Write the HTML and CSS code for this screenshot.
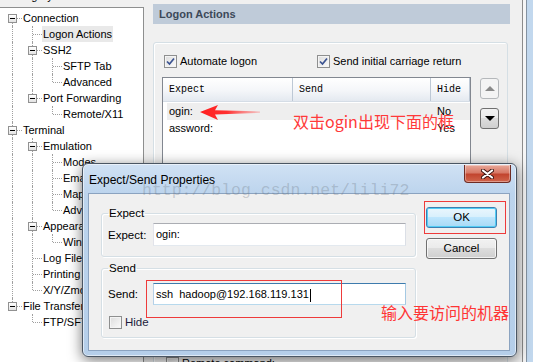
FILE: index.html
```html
<!DOCTYPE html>
<html lang="en">
<head>
  <meta charset="UTF-8">
  <title>Session Options - Logon Actions</title>
  <link rel="stylesheet" href="styles.css">
</head>
<body>
  <div class="tree-pane">
    <div class="category"><span>Category:</span></div>
    <div class="tree">
      <div class="node"><span class="cell tg dn"><i class="tog"></i></span><span class="label">Connection</span></div>
      <div class="node"><span class="cell v"></span><span class="cell t"></span><span class="label sel">Logon Actions</span></div>
      <div class="node"><span class="cell v"></span><span class="cell tg both"><i class="tog"></i></span><span class="label">SSH2</span></div>
      <div class="node"><span class="cell v"></span><span class="cell v"></span><span class="cell t"></span><span class="label">SFTP Tab</span></div>
      <div class="node"><span class="cell v"></span><span class="cell v"></span><span class="cell l"></span><span class="label">Advanced</span></div>
      <div class="node"><span class="cell v"></span><span class="cell tg up"><i class="tog"></i></span><span class="label">Port Forwarding</span></div>
      <div class="node"><span class="cell v"></span><span class="cell"></span><span class="cell l"></span><span class="label">Remote/X11</span></div>
      <div class="node"><span class="cell tg both"><i class="tog"></i></span><span class="label">Terminal</span></div>
      <div class="node"><span class="cell v"></span><span class="cell tg both"><i class="tog"></i></span><span class="label">Emulation</span></div>
      <div class="node"><span class="cell v"></span><span class="cell v"></span><span class="cell t"></span><span class="label">Modes</span></div>
      <div class="node"><span class="cell v"></span><span class="cell v"></span><span class="cell t"></span><span class="label">Emacs</span></div>
      <div class="node"><span class="cell v"></span><span class="cell v"></span><span class="cell t"></span><span class="label">Mapped Keys</span></div>
      <div class="node"><span class="cell v"></span><span class="cell v"></span><span class="cell l"></span><span class="label">Advanced</span></div>
      <div class="node"><span class="cell v"></span><span class="cell tg both"><i class="tog"></i></span><span class="label">Appearance</span></div>
      <div class="node"><span class="cell v"></span><span class="cell v"></span><span class="cell l"></span><span class="label">Window</span></div>
      <div class="node"><span class="cell v"></span><span class="cell t"></span><span class="label">Log File</span></div>
      <div class="node"><span class="cell v"></span><span class="cell t"></span><span class="label">Printing</span></div>
      <div class="node"><span class="cell v"></span><span class="cell l"></span><span class="label">X/Y/Zmodem</span></div>
      <div class="node"><span class="cell tg up"><i class="tog"></i></span><span class="label">File Transfer</span></div>
      <div class="node"><span class="cell"></span><span class="cell l"></span><span class="label">FTP/SFTP</span></div>
    </div>
  </div>

  <div class="main">
    <div class="page-title">Logon Actions</div>
    <div class="group">
      <div class="checks">
        <span class="check"><span class="cb"><svg width="11" height="11" viewBox="0 0 11 11"><path d="M2 5.5 L4.5 8 L9 2.5" fill="none" stroke="#3b5391" stroke-width="1.7"/></svg></span>Automate logon</span>
        <span class="check"><span class="cb"><svg width="11" height="11" viewBox="0 0 11 11"><path d="M2 5.5 L4.5 8 L9 2.5" fill="none" stroke="#3b5391" stroke-width="1.7"/></svg></span>Send initial carriage return</span>
      </div>
      <div class="list-row">
        <div class="list">
          <div class="list-head">
            <span class="col c1">Expect</span><span class="col c2">Send</span><span class="col c3">Hide</span>
          </div>
          <div class="list-body">
            <div class="item sel"><span class="col c1">ogin:</span><span class="col c2"></span><span class="col c3">No</span></div>
            <div class="item"><span class="col c1">assword:</span><span class="col c2"></span><span class="col c3">Yes</span></div>
          </div>
        </div>
        <div class="arrows">
          <span class="arrow off"><svg width="10" height="5" viewBox="0 0 10 5"><polygon points="0,5 5,0 10,5" fill="#8a8a8a"/></svg></span>
          <span class="arrow"><svg width="10" height="5" viewBox="0 0 10 5"><polygon points="0,0 10,0 5,5" fill="#000"/></svg></span>
        </div>
      </div>
      <span class="check remote"><span class="cb"></span>Remote command:</span>
    </div>
  </div>
  <div class="edge"></div>

  <svg class="pointer" width="64" height="19" viewBox="0 0 64 19">
    <defs>
      <linearGradient id="fade" x1="0" x2="1" y1="0" y2="0">
        <stop offset="0" stop-color="#ff1e1e"/>
        <stop offset="0.45" stop-color="#ff3030"/>
        <stop offset="1" stop-color="#ff6a6a" stop-opacity="0.35"/>
      </linearGradient>
    </defs>
    <polygon points="2,9 20,2 17,7.2 62,8.4 62,9.8 17,11.4 20,17" fill="url(#fade)"/>
  </svg>
  <div class="note note-list">双击ogin出现下面的框</div>

  <div class="dialog">
    <div class="titlebar">
      <span class="title">Expect/Send Properties</span>
      <span class="close"><svg width="13" height="10" viewBox="0 0 13 10"><path d="M2 1.5 L11 8.5 M11 1.5 L2 8.5" stroke="#3c1410" stroke-width="4" stroke-linecap="round"/><path d="M2 1.5 L11 8.5 M11 1.5 L2 8.5" stroke="#fff" stroke-width="2.2" stroke-linecap="round"/></svg></span>
    </div>
    <div class="client">
      <div class="fields">
        <fieldset class="fs fs-expect">
          <legend>Expect</legend>
          <div class="field"><span class="field-label">Expect:</span><div class="text">ogin:</div></div>
        </fieldset>
        <fieldset class="fs fs-send">
          <legend>Send</legend>
          <div class="field"><span class="field-label">Send:</span><div class="text focus">ssh  hadoop@192.168.119.131<span class="caret"></span></div></div>
          <span class="check hide"><span class="cb"></span>Hide</span>
        </fieldset>
      </div>
      <div class="buttons">
        <span class="btn default">OK</span>
        <span class="btn">Cancel</span>
      </div>
    </div>
    <div class="watermark">http://blog.csdn.net/lili72</div>
    <div class="mark mark-ok"></div>
    <div class="mark mark-send"></div>
    <div class="note note-send">输入要访问的机器</div>
  </div>
</body>
</html>
```

FILE: styles.css
```css
body {
  margin: 0;
  width: 533px;
  height: 362px;
  overflow: hidden;
  position: relative;
  display: flex;
  background-color: #f0f0f0;
  color: #000;
  font-family: "Liberation Sans", Arial, sans-serif;
  font-size: 11px;
}

/* left category tree */
.tree-pane {
  width: 144px;
  flex: none;
  display: flex;
  flex-direction: column;
}

.category {
  height: 7px;
  overflow: hidden;
  padding-left: 8px;
}

.category span {
  display: block;
  line-height: 14px;
  margin-top: -11px;
}

.tree {
  flex: 1;
  background-color: #fff;
  border-top: 1px solid #8e8f8f;
  border-right: 1px solid #8e8f8f;
  padding: 2px 0 0 2px;
}

.node {
  display: flex;
  height: 16px;
  white-space: nowrap;
}

.cell {
  position: relative;
  width: 20px;
  height: 16px;
  flex: none;
}

.cell.v::before,
.cell.t::before,
.cell.l::before,
.cell.tg::before {
  content: '';
  position: absolute;
  left: 10px;
  top: 0;
  bottom: 0;
  border-left: 1px dotted #a0a0a0;
}

.cell.l::before { bottom: 8px; }
.cell.tg.up::before { bottom: 12px; }
.cell.tg.dn::before { top: 12px; }

.cell.t::after,
.cell.l::after,
.cell.tg::after {
  content: '';
  position: absolute;
  left: 11px;
  right: 0;
  top: 8px;
  border-top: 1px dotted #a0a0a0;
}

.cell.tg::after { left: 15px; }

.tog {
  position: absolute;
  left: 6px;
  top: 4px;
  width: 9px;
  height: 9px;
  box-sizing: border-box;
  border: 1px solid #919191;
  background: linear-gradient(#fff, #e3e3e3);
  z-index: 1;
}

.tog::after {
  content: '';
  position: absolute;
  left: 1px;
  top: 3px;
  width: 5px;
  height: 1px;
  background-color: #000;
}

.label {
  padding: 0 1px;
  line-height: 16px;
}

.label.sel {
  background-color: #e9e9e9;
}

/* right page */
.main {
  flex: 1;
  padding: 4px 12px 0 9px;
}

.page-title {
  height: 20px;
  line-height: 20px;
  padding-left: 6px;
  background-color: #bfcbd9;
  color: #3c4858;
  font-weight: bold;
}

.group {
  margin: 18px 2px 0 0;
  height: 340px;
  border: 1px solid #d5dfe5;
  border-radius: 3px;
  box-shadow: inset 1px 1px 0 #fff;
  padding: 12px 8px 0;
}

.checks {
  display: flex;
  padding-left: 2px;
  height: 13px;
}

.checks .check:first-child {
  width: 153px;
}

.check {
  display: flex;
  align-items: center;
  gap: 3px;
  line-height: 13px;
  white-space: nowrap;
}

.cb {
  width: 13px;
  height: 13px;
  flex: none;
  box-sizing: border-box;
  border: 1px solid #8e8f8f;
  background: linear-gradient(135deg, #dcdcdc, #fbfbfb);
  box-shadow: inset 0 0 0 1px #f4f4f4;
  display: flex;
  align-items: center;
  justify-content: center;
}

.list-row {
  display: flex;
  gap: 9px;
  margin-top: 9px;
}

.list {
  width: 309px;
  height: 180px;
  box-sizing: border-box;
  border: 1px solid #828790;
  background-color: #fff;
}

.list-head {
  display: flex;
  height: 24px;
  box-sizing: border-box;
  background: linear-gradient(#fff, #f4f6f9 55%, #e4e9f0);
  border-bottom: 1px solid #d5dde6;
  font-family: "Liberation Mono", monospace;
  font-size: 10px;
  line-height: 23px;
}

.col {
  box-sizing: border-box;
  padding-left: 6px;
  flex: none;
}

.c1 { width: 130px; }
.c2 { width: 138px; }
.c3 { width: 39px; }

.list-head .col {
  border-right: 1px solid #bdc8d5;
}

.list-body {
  padding-top: 1px;
}

.item {
  display: flex;
  height: 17px;
  line-height: 17px;
}

.item.sel {
  background: linear-gradient(to right, transparent 4px, #eeeeee 4px);
}

.arrows {
  display: flex;
  flex-direction: column;
  gap: 9px;
  margin-top: 1px;
}

.arrow {
  width: 19px;
  height: 21px;
  box-sizing: border-box;
  border: 1px solid #707070;
  border-radius: 3px;
  background: linear-gradient(#f2f2f2, #ebebeb 50%, #dddddd 50%, #cfcfcf);
  display: flex;
  align-items: center;
  justify-content: center;
}

.arrow.off {
  border-color: #b5b8bb;
  background: #f4f4f4;
}

.remote {
  margin-top: 100px;
  padding-left: 4px;
}

.edge {
  width: 11px;
  flex: none;
  background: linear-gradient(to right, #8c8c8c 0 1px, #f6f6f6 1px 4px, #8593a2 4px 5px, #c2d8ee 5px);
}

/* annotations */
.pointer {
  position: absolute;
  left: 198px;
  top: 103px;
}

.note {
  position: absolute;
  font-family: "Noto Sans CJK SC", sans-serif;
  font-size: 16px;
  line-height: 20px;
  color: #ff3a3a;
  white-space: nowrap;
}

.note-list {
  left: 293px;
  top: 111px;
}

/* expect/send dialog */
.dialog {
  position: absolute;
  left: 82px;
  top: 163px;
  width: 435px;
  height: 194px;
  box-sizing: border-box;
  border: 1px solid #4b5663;
  border-radius: 6px;
  background: linear-gradient(#d0e1f4, #bcd4ed 30px, #b5cee9);
  box-shadow: inset 0 0 0 1px rgba(255, 255, 255, 0.55), 0 3px 14px rgba(0, 0, 0, 0.55);
  display: flex;
  flex-direction: column;
}

.titlebar {
  height: 29px;
  flex: none;
  display: flex;
  justify-content: space-between;
  align-items: flex-start;
  padding-left: 6px;
}

.title {
  font-size: 12px;
  line-height: 14px;
  padding-top: 9px;
}

.close {
  width: 47px;
  height: 18px;
  margin: 1px 5px 0 0;
  box-sizing: border-box;
  border: 1px solid #6e2c24;
  border-top: none;
  border-radius: 0 0 4px 4px;
  background: linear-gradient(#e9a899, #d77a68 45%, #c2452f 55%, #d0654c);
  box-shadow: inset 0 0 0 1px rgba(255, 255, 255, 0.35);
  display: flex;
  align-items: center;
  justify-content: center;
}

.client {
  flex: 1;
  margin: 0 6px 5px 5px;
  border: 1px solid #8ba3c0;
  background-color: #f0f0f0;
  display: flex;
}

.fields {
  width: 315px;
  margin-left: 12px;
}

.fs {
  margin: 0;
  padding: 0 9px 10px 6px;
  border: 1px solid #d5dfe5;
  border-radius: 3px;
  box-shadow: inset 1px 1px 0 #fff, 1px 1px 0 #fff;
}

.fs legend {
  padding: 0 1px;
  font-size: 11.5px;
  line-height: 14px;
}

.fs-expect {
  margin-top: 12px;
}

.fs-send {
  margin-top: 4px;
  padding-bottom: 8px;
}

.field {
  display: flex;
  align-items: center;
  margin-top: 3px;
}

.fs-send .field {
  margin-top: 8px;
}

.field-label {
  width: 45px;
  flex: none;
  font-size: 11.5px;
}

.text {
  width: 253px;
  height: 23px;
  box-sizing: border-box;
  border: 1px solid;
  border-color: #abadb3 #dbdfe6 #e3e9ef #e2e3ea;
  background-color: #fff;
  padding: 0 2px;
  line-height: 21px;
  white-space: pre;
}

.text.focus {
  height: 22px;
  line-height: 20px;
  border-color: #3d7bad #a4c9e3 #b7d9ed #b5cfe7;
}

.caret {
  display: inline-block;
  width: 1px;
  height: 13px;
  margin-left: 1px;
  background-color: #000;
  vertical-align: middle;
}

.hide {
  margin-top: 11px;
  padding-left: 1px;
  font-size: 11.5px;
  color: #1c1c3c;
}

.buttons {
  margin: 13px 0 0 10px;
  display: flex;
  flex-direction: column;
  gap: 10px;
}

.btn {
  width: 71px;
  height: 21px;
  box-sizing: border-box;
  border: 1px solid #707070;
  border-radius: 3px;
  background: linear-gradient(#f2f2f2, #ebebeb 45%, #dddddd 50%, #cfcfcf);
  box-shadow: inset 0 0 0 1px rgba(255, 255, 255, 0.7);
  font-size: 11.5px;
  line-height: 19px;
  text-align: center;
}

.btn.default {
  border-color: #3c7fb1;
  background: linear-gradient(#eaf6fd, #d9f0fc 45%, #bee6fd 50%, #a7d9f5);
  box-shadow: inset 0 0 0 1px #52cdf5;
}

.watermark {
  position: absolute;
  left: 59px;
  top: 18px;
  font-family: "Liberation Mono", monospace;
  font-size: 16.5px;
  line-height: 18px;
  color: rgba(105, 115, 125, 0.3);
  white-space: nowrap;
}

.mark {
  position: absolute;
  border: 1px solid #ee3b3b;
}

.mark-ok {
  left: 341px;
  top: 37px;
  width: 80px;
  height: 31px;
}

.mark-send {
  left: 63px;
  top: 116px;
  width: 194px;
  height: 36px;
}

.note-send {
  left: 298px;
  top: 138px;
  color: #ff3535;
}
```
